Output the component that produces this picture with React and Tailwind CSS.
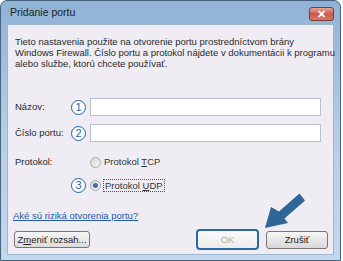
import React from 'react';

const font = { fontFamily: '"Liberation Sans", Arial, sans-serif' };

function Num({ n }) {
  return (
    <span className="flex items-center justify-center w-[15px] h-[15px] rounded-full border-[1.5px] border-[#1b63ad] bg-white text-[11px] leading-none text-[#1b63ad]">
      {n}
    </span>
  );
}

function Radio({ checked }) {
  return (
    <span className="flex items-center justify-center w-[11px] h-[11px] rounded-full border border-[#a9a9a9] bg-gradient-to-br from-[#d8d8d8] to-[#f6f6f6]">
      {checked && <span className="w-[5px] h-[5px] rounded-full bg-[#3b6fa8]" />}
    </span>
  );
}

export default function App() {
  return (
    <div className="relative w-[343px] h-[261px] bg-white text-[9.5px] text-[#2a2a2a]" style={font}>
      <div className="w-[341px] h-[261px] flex flex-col rounded-t-[7px] border border-[#46627f] bg-gradient-to-b from-[#8fb2d5] via-[#b5cde5] to-[#c3d8ed]">
        <div className="h-[23px] flex items-center justify-between pl-[9px] pr-[6px]">
          <span className="text-[10.5px] text-[#222]">Pridanie portu</span>
          <span className="flex items-center justify-center w-[25px] h-[14px] mt-[3px] rounded-[3px] border border-[#7a3a35] bg-gradient-to-b from-[#e9a49a] via-[#c9584b] to-[#d87a6a] text-white text-[11px] font-bold leading-none">
            ✕
          </span>
        </div>
        <div className="flex-1 mx-[6px] mb-[5px] border border-[#9fb6cf] bg-[#efedf3] flex flex-col">
          <p className="pl-[7px] pr-[2px] pt-[11px] leading-[11px] whitespace-nowrap">
            Tieto nastavenia použite na otvorenie portu prostredníctvom brány<br />
            Windows Firewall. Číslo portu a protokol nájdete v dokumentácii k programu<br />
            alebo službe, ktorú chcete používať.
          </p>
          <div className="mt-[29px] flex items-center h-[18px] pl-[7px]">
            <span className="w-[56px]">Názov:</span>
            <Num n="1" />
            <span className="ml-[4px] w-[231px] h-[18px] border border-[#b7bfc9] bg-white" />
          </div>
          <div className="mt-[8px] flex items-center h-[18px] pl-[7px]">
            <span className="w-[56px]">Číslo portu:</span>
            <Num n="2" />
            <span className="ml-[4px] w-[231px] h-[18px] border border-[#b7bfc9] bg-white" />
          </div>
          <div className="mt-[13px] flex items-center h-[14px] pl-[7px]">
            <span className="w-[75px]">Protokol:</span>
            <Radio />
            <span className="ml-[3px] text-[#333]">Protokol <u>T</u>CP</span>
          </div>
          <div className="mt-[9px] flex items-center h-[14px] pl-[63px]">
            <Num n="3" />
            <span className="ml-[4px]"><Radio checked /></span>
            <span className="ml-[2px] px-[1px] border border-dotted border-[#555] text-[#333] leading-[11px]">
              Protokol <u>U</u>DP
            </span>
          </div>
          <a className="mt-[17px] ml-[5px] text-[#2657a8] underline">Aké sú riziká otvorenia portu?</a>
          <div className="mt-[6px] flex items-center pl-[6px] pr-[5px]">
            <button className="w-[76px] h-[17px] rounded-[3px] border border-[#777] bg-gradient-to-b from-[#f6f6f6] to-[#dcdcdc] text-[9.5px] text-[#222]">
              Z<u>m</u>eniť rozsah...
            </button>
            <button className="ml-auto w-[63px] h-[21px] rounded-[4px] border-2 border-[#2b6aa1] bg-gradient-to-b from-[#fafafa] to-[#ececec] text-[9.5px] text-[#b0b0b0]">
              OK
            </button>
            <button className="ml-[7px] w-[62px] h-[18px] rounded-[3px] border border-[#777] bg-gradient-to-b from-[#f6f6f6] to-[#d8d8d8] text-[9.5px] text-[#222]">
              Zrušiť
            </button>
          </div>
        </div>
      </div>
      <svg className="absolute inset-0 pointer-events-none" width="343" height="261" viewBox="0 0 343 261">
        <polygon
          points="265,228 288,223 284.5,218.5 305,200.5 299.5,193.5 279,211.5 271,207"
          fill="#2e6697"
        />
      </svg>
    </div>
  );
}
